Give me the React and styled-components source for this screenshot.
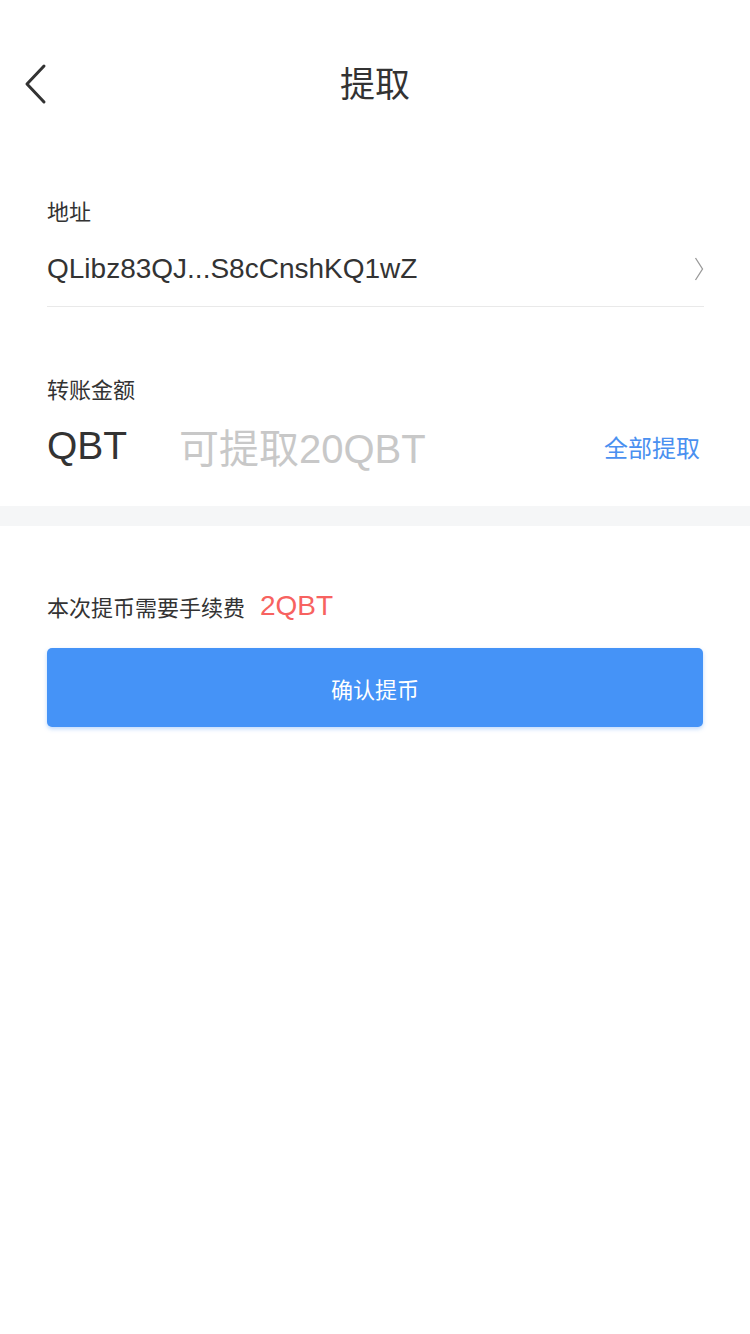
import React from 'react'
import styled, { createGlobalStyle } from 'styled-components'

const Global = createGlobalStyle`
  body {
    margin: 0;
    background: #fff;
    font-family: 'Liberation Sans', 'Noto Sans CJK SC', sans-serif;
  }
`

const Page = styled.div`
  width: 750px;
  min-height: 1334px;
  background: #fff;
`

const NavBar = styled.div`
  height: 88px;
  margin-top: 37px;
  display: flex;
  align-items: center;
  justify-content: center;
  position: relative;
`

const Back = styled.button`
  position: absolute;
  left: 20px;
  top: 25px;
  border: none;
  background: none;
  padding: 0;
  width: 30px;
  height: 44px;
`

const Title = styled.div`
  font-size: 35px;
  color: #333;
`

const Section = styled.div`
  padding: 0 46px 0 47px;
`

const Label = styled.div`
  font-size: 22px;
  color: #333;
  line-height: 30px;
`

const AddressRow = styled.div`
  display: flex;
  align-items: center;
  justify-content: space-between;
  height: 50px;
  margin-top: 16px;
  border-bottom: 1px solid #e9e9e9;
  padding-bottom: 12px;
`

const Address = styled.div`
  font-size: 28px;
  color: #333;
`

const AmountRow = styled.div`
  display: flex;
  align-items: center;
  height: 74px;
  margin-top: 3px;
`

const Unit = styled.div`
  font-size: 39px;
  color: #333;
  width: 132px;
`

const Placeholder = styled.div`
  font-size: 40px;
  color: #c8c8c8;
  flex: 1;
`

const AllLink = styled.div`
  font-size: 24px;
  color: #4a90f0;
  margin-right: 4px;
`

const Band = styled.div`
  height: 20px;
  background: #f5f6f7;
`

const FeeRow = styled.div`
  display: flex;
  align-items: center;
  gap: 15px;
  height: 40px;
`

const FeeText = styled.span`
  font-size: 22px;
  color: #333;
`

const FeeValue = styled.span`
  font-size: 28px;
  color: #f76260;
`

const Confirm = styled.button`
  display: block;
  width: 656px;
  height: 79px;
  margin-top: 22px;
  border: none;
  border-radius: 5px;
  background: #4593f7;
  color: #fff;
  font-size: 22px;
  font-family: inherit;
  box-shadow: 0 2px 4px rgba(69, 147, 247, 0.35);
`

export default function App() {
  return (
    <Page>
      <Global />
      <NavBar>
        <Back>
          <svg width="30" height="44" viewBox="0 0 30 44">
            <path d="M24 4 L7 22 L24 40" fill="none" stroke="#333" strokeWidth="3" strokeLinecap="round" strokeLinejoin="round" />
          </svg>
        </Back>
        <Title>提取</Title>
      </NavBar>

      <Section style={{ paddingTop: 73 }}>
        <Label>地址</Label>
        <AddressRow>
          <Address>QLibz83QJ...S8cCnshKQ1wZ</Address>
          <svg width="10" height="24" viewBox="0 0 10 24">
            <path d="M1.5 1 L8.5 12 L1.5 23" fill="none" stroke="#999" strokeWidth="1.3" />
          </svg>
        </AddressRow>
      </Section>

      <Section style={{ paddingTop: 69, paddingBottom: 23 }}>
        <Label>转账金额</Label>
        <AmountRow>
          <Unit>QBT</Unit>
          <Placeholder>可提取20QBT</Placeholder>
          <AllLink>全部提取</AllLink>
        </AmountRow>
      </Section>

      <Band />

      <Section style={{ paddingTop: 60 }}>
        <FeeRow>
          <FeeText>本次提币需要手续费</FeeText>
          <FeeValue>2QBT</FeeValue>
        </FeeRow>
        <Confirm>确认提币</Confirm>
      </Section>
    </Page>
  )
}
